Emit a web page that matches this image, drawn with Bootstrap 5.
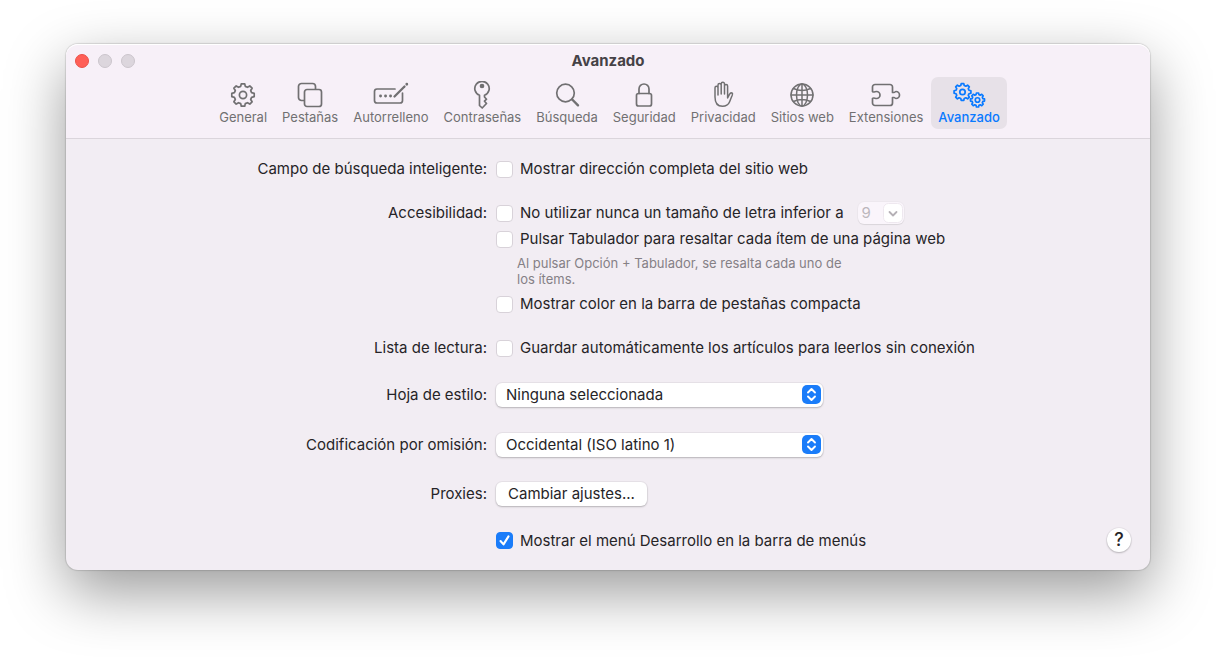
<!DOCTYPE html>
<html lang="es">
<head>
<meta charset="utf-8">
<meta name="viewport" content="width=device-width, initial-scale=1">
<title>Avanzado</title>
<link href="https://cdn.jsdelivr.net/npm/bootstrap@5.3.0/dist/css/bootstrap.min.css" rel="stylesheet">
<style>
  body { background: #fff; color: #262427; font-family: Inter, "Liberation Sans", sans-serif; font-size: 15px; line-height: 26px; padding: 44px 66px; }
  .prefs { background: #f2edf3; border-radius: 12px; box-shadow: 0 0 1px 1px rgba(0,0,0,.12), 0 22px 60px rgba(0,0,0,.4); }
  .prefs-head { background: #f7f0f8; border-bottom: 1px solid #dbd5dc; border-radius: 12px 12px 0 0; padding-bottom: 9px; box-shadow: inset 0 1px 0 #fff; }
  .titlebar { height: 33px; padding: 0 9px; }
  .titlebar h1 { font-size: 15px; line-height: 32px; font-weight: 700; color: #454246; }
  .lights { gap: 9px; flex: 1 1 0; }
  .light { width: 14px; height: 14px; border: 1px solid #cbc5cc; background: #dcd6dd; }
  .light-close { background: #ff5f57; border-color: #ea5149; }
  .tools { gap: 1px; padding-left: 3px; }
  .tool { border: 0; background: none; border-radius: 7px; padding: 0 7px; height: 52px; font-size: 13px; line-height: 16px; color: #717072; }
  .tool svg { display: block; height: 28px; margin: 0 auto; fill: none; stroke: currentColor; stroke-width: 1.7; stroke-linecap: round; stroke-linejoin: round; }
  .tool.active { background: #e7e1e8; color: #0a7aff; font-weight: 500; }
  .prefs-body { padding: 17px 0; }
  .line-label { width: calc(50% - 121px); text-align: right; flex: none; }
  .line { display: flex; gap: 9px; }
  .line-tight { margin-top: 18px; }
  .line-mid { margin-top: 21px; line-height: 25px; }
  .line-wide { margin-top: 25px; line-height: 25px; }
  .line-push { margin-top: 24px; line-height: 25px; }
  .tick { display: flex; align-items: center; gap: 7px; min-height: 26px; }
  .tick .form-check-input { width: 17px; height: 17px; margin: 0; border: 1px solid #d8d2d9; border-radius: 4px; background-color: #fff; flex: none; }
  .tick .form-check-input:checked { background-color: #1a7cf9; border-color: #1a7cf9; background-size: 17px 17px; background-image: url("data:image/svg+xml,%3Csvg xmlns='http://www.w3.org/2000/svg' viewBox='0 0 17 17'%3E%3Cpath d='M4.5 9l3 3.4 5-8' fill='none' stroke='%23fff' stroke-width='2.1' stroke-linecap='round' stroke-linejoin='round'/%3E%3C/svg%3E"); }
  .hint { max-width: 356px; font-size: 13px; line-height: 16px; color: #858086; padding: 3px 0 4px 21px; }
  .popup, .push, .helper { border: 0; background-color: #fff; box-shadow: 0 0 0 1px rgba(0,0,0,.04), 0 1px 2px rgba(0,0,0,.22); color: #262427; }
  .popup { appearance: none; width: 327px; max-width: 100%; height: 24px; border-radius: 6px; padding: 0 30px 0 10px; line-height: 24px; background-repeat: no-repeat; background-position: right 2px center; background-image: url("data:image/svg+xml,%3Csvg xmlns='http://www.w3.org/2000/svg' width='19' height='19'%3E%3Crect width='19' height='19' rx='5' fill='%231a7cf9'/%3E%3Cpath d='M6 7.5l3.5-3.5L13 7.500M6 11.500l3.500 3.500 3.500-3.500' fill='none' stroke='%23fff' stroke-width='1.900' stroke-linecap='round' stroke-linejoin='round'/%3E%3C/svg%3E"); }
  .popup-size { width: 46px; height: 22px; margin-left: 7px; padding: 0 0 0 4px; line-height: 22px; color: #bcb7bd; opacity: 1; background-color: #faf5fb; box-shadow: 0 0 0 1px rgba(0,0,0,.02), 0 1px 1px rgba(0,0,0,.08); background-position: right 1px center; background-image: url("data:image/svg+xml,%3Csvg xmlns='http://www.w3.org/2000/svg' width='20' height='20'%3E%3Crect x='.5' y='.5' width='19' height='19' rx='5' fill='%23fff' stroke='%23eee8ef'/%3E%3Cpath d='M6.500 9l3.500 3.500L13.500 9' fill='none' stroke='%23b5b0b6' stroke-width='1.800' stroke-linecap='round' stroke-linejoin='round'/%3E%3C/svg%3E"); }
  .push { height: 24px; border-radius: 6px; padding: 0 12px; line-height: 24px; }
  .helper { width: 24px; height: 24px; line-height: 24px; font-size: 18px; font-weight: 500; padding: 0; margin-right: 19px; }
</style>
</head>
<body class="min-vh-100">
<svg class="d-none" aria-hidden="true">
  <symbol id="gear" viewBox="-12 -12 24 24" overflow="visible">
    <path d="M8.600-2.300 11.200-1.700V1.700L8.600 2.300 7.700 4.450 9.100 6.800 6.800 9.100 4.450 7.700 2.300 8.600 1.700 11.200H-1.700L-2.300 8.600-4.450 7.700-6.800 9.100-9.100 6.800-7.700 4.450-8.600 2.300-11.200 1.700V-1.700L-8.600-2.300-7.700-4.450-9.100-6.800-6.800-9.100-4.450-7.700-2.300-8.600-1.700-11.200H1.700L2.300-8.600 4.450-7.700 6.800-9.100 9.100-6.800 7.700-4.450Z"/>
    <circle r="3.600"/>
  </symbol>
</svg>
<main class="prefs">
  <header class="prefs-head">
    <div class="titlebar d-flex align-items-center">
      <div class="lights d-flex">
        <button class="light light-close rounded-circle p-0" aria-label="Cerrar"></button>
        <button class="light rounded-circle p-0" aria-label="Minimizar" disabled></button>
        <button class="light rounded-circle p-0" aria-label="Ampliar" disabled></button>
      </div>
      <h1 class="m-0">Avanzado</h1>
      <div class="lights"></div>
    </div>
    <nav class="tools d-flex flex-wrap justify-content-center" aria-label="Preferencias">
      <button class="tool"><svg width="28" viewBox="0 0 28 28"><use href="#gear" x="2" y="2" width="24" height="24"/></svg>General</button>
      <button class="tool"><svg width="28" viewBox="0 0 28 28"><path d="M8 19.500H5.500A3 3 0 0 1 2.500 16.500V5.500A3 3 0 0 1 5.500 2.500H16.500A3 3 0 0 1 19.500 5.500V8"/><rect x="8.500" y="8.500" width="17" height="17" rx="2.500"/></svg>Pestañas</button>
      <button class="tool"><svg width="36" viewBox="0 0 36 28"><path d="M22 8H4A2.500 2.500 0 0 0 1.500 10.500V19.500A2.500 2.500 0 0 0 4 22H27A2.500 2.500 0 0 0 29.500 19.500V12"/><path d="M21.500 15.500 31.500 5.500" stroke-width="2.300"/><path d="M33.800 3.200v.1M7.500 15h.1M12.500 15h.1M17.500 15h.1" stroke-width="2.800"/></svg>Autorrelleno</button>
      <button class="tool"><svg width="28" viewBox="0 0 28 28"><path d="M11.500 14.300A7.200 7.200 0 1 1 16.500 14.300V16L18.500 18.200 16.500 20.200 18.500 22.500 14.200 27 11.500 24.500Z"/><circle cx="14" cy="5" r="1.500" fill="currentColor"/></svg>Contraseñas</button>
      <button class="tool"><svg width="28" viewBox="0 0 28 28"><circle cx="12.500" cy="12" r="8.800"/><path d="M19.200 18.500 25 24.300" stroke-width="2.400"/></svg>Búsqueda</button>
      <button class="tool"><svg width="28" viewBox="0 0 28 28"><rect x="6.500" y="12.500" width="15" height="12.500" rx="2"/><path d="M9 12.500V8a5 5 0 0 1 10 0V12.500"/></svg>Seguridad</button>
      <button class="tool"><svg width="28" viewBox="0 0 28 28"><g stroke-width="1.500"><path d="M6 16V6.800a1.500 1.500 0 0 1 3 0V14M9 13V4a1.500 1.500 0 0 1 3.200 0V13M12.200 13V3a1.600 1.600 0 0 1 3.300 0V13M15.500 13V5a1.500 1.500 0 0 1 3.100 0V17L20.600 13.200Q21.500 11.300 23.300 12.100C23.800 12.600 23.500 13.500 23.200 14.300L20.500 21C19 24.500 16.800 25.300 13.500 25.300 8.500 25.300 6 22 6 16"/></g></svg>Privacidad</button>
      <button class="tool"><svg width="28" viewBox="0 0 28 28"><g stroke-width="1.500"><circle cx="14" cy="14" r="11"/><ellipse cx="14" cy="14" rx="5.500" ry="11"/><path d="M14 3V25M3 14H25M5.500 7.500Q14 11.500 22.500 7.500M5.500 20.500Q14 16.500 22.500 20.500"/></g></svg>Sitios web</button>
      <button class="tool"><svg width="30" viewBox="0 0 30 28"><path d="M1.500 10.500V6A2.500 2.500 0 0 1 4 3.500H19A2.500 2.500 0 0 1 21.500 6V11.500H23C24 11.500 24 10.500 25 10.500A3.500 3.500 0 0 1 25 17.500C24 17.500 24 16.500 23 16.500H21.500V22A2.500 2.500 0 0 1 19 24.500H4A2.500 2.500 0 0 1 1.500 22V17.500C2.500 16.200 4 17.500 5.500 17.500A3.500 3.500 0 0 0 5.500 10.500C4 10.500 2.500 11.800 1.500 10.500Z"/></svg>Extensiones</button>
      <button class="tool active" aria-current="page"><svg width="34" viewBox="0 0 34 28"><use href="#gear" x="1.500" y="2" width="18" height="18" stroke-width="2.300"/><use href="#gear" x="18" y="11.500" width="15" height="15" stroke-width="2.700"/></svg>Avanzado</button>
    </nav>
  </header>

  <form class="prefs-body">
    <div class="line">
      <div class="line-label">Campo de búsqueda inteligente:</div>
      <label class="tick"><input class="form-check-input" type="checkbox">Mostrar dirección completa del sitio web</label>
    </div>
    <div class="line line-tight">
      <div class="line-label">Accesibilidad:</div>
      <div>
        <div class="tick">
          <label class="tick"><input class="form-check-input" type="checkbox">No utilizar nunca un tamaño de letra inferior a</label>
          <select class="popup popup-size" aria-label="Tamaño de letra" disabled><option>9</option></select>
        </div>
        <label class="tick"><input class="form-check-input" type="checkbox" aria-describedby="tab-hint">Pulsar Tabulador para resaltar cada ítem de una página web</label>
        <div class="hint" id="tab-hint">Al pulsar Opción + Tabulador, se resalta cada uno de los ítems.</div>
        <label class="tick"><input class="form-check-input" type="checkbox">Mostrar color en la barra de pestañas compacta</label>
      </div>
    </div>
    <div class="line line-tight">
      <div class="line-label">Lista de lectura:</div>
      <label class="tick"><input class="form-check-input" type="checkbox">Guardar automáticamente los artículos para leerlos sin conexión</label>
    </div>
    <div class="line line-mid align-items-center">
      <label class="line-label" for="sheet">Hoja de estilo:</label>
      <select class="popup" id="sheet"><option>Ninguna seleccionada</option></select>
    </div>
    <div class="line line-wide align-items-center">
      <label class="line-label" for="enc">Codificación por omisión:</label>
      <select class="popup" id="enc"><option>Occidental (ISO latino 1)</option></select>
    </div>
    <div class="line line-push align-items-center">
      <div class="line-label">Proxies:</div>
      <button type="button" class="push">Cambiar ajustes...</button>
    </div>
    <div class="line line-mid align-items-center">
      <div class="line-label"></div>
      <label class="tick"><input class="form-check-input" type="checkbox" checked>Mostrar el menú Desarrollo en la barra de menús</label>
      <button type="button" class="helper rounded-circle ms-auto" aria-label="Ayuda">?</button>
    </div>
  </form>
</main>
<script src="https://cdn.jsdelivr.net/npm/bootstrap@5.3.0/dist/js/bootstrap.bundle.min.js"></script>
</body>
</html>
